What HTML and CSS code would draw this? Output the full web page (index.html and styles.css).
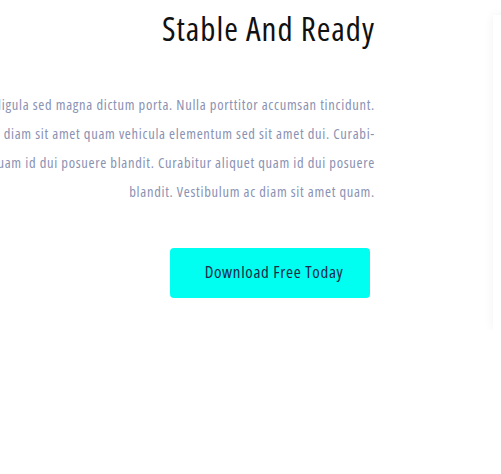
FILE: index.html
```html
<!DOCTYPE html>
<html>
<head>
<meta charset="utf-8">
<link rel="stylesheet" href="styles.css">
</head>
<body>
<div class="page">
  <section class="content">
    <h2 class="title">Stable And Ready</h2>
    <div class="text">
      <span class="line">Curabitur non nulla sit amet nisl tempus convallis quis ac lectus ligula sed magna dictum porta. Nulla porttitor accumsan tincidunt.</span>
      <span class="line">Vivamus suscipit tortor eget felis porttitor volutpat. Vestibulum diam sit amet quam vehicula elementum sed sit amet dui. Curabi-</span>
      <span class="line">tur arcu erat, accumsan id imperdiet et, porttitor at sem quam id dui posuere blandit. Curabitur aliquet quam id dui posuere</span>
      <span class="line">blandit. Vestibulum ac diam sit amet quam.</span>
    </div>
    <div class="actions">
      <a class="btn" href="#">Download Free Today</a>
    </div>
  </section>
  <aside class="side"></aside>
</div>
</body>
</html>
```
FILE: styles.css
```css
html, body {
  margin: 0;
  padding: 0;
  background: #ffffff;
  overflow: hidden;
}
body {
  font-family: "Open Sans", "Noto Sans", sans-serif;
  font-stretch: 75%;
}
.page {
  display: flex;
  width: 800px;
}
.content {
  flex: 0 0 375px;
  min-width: 0;
  display: flex;
  flex-direction: column;
  align-items: flex-end;
  margin-right: 118px;
}
.title {
  margin: 9px 0 0 0;
  font-size: 33px;
  letter-spacing: 1px;
  font-weight: 400;
  line-height: 40px;
  color: #111111;
  white-space: nowrap;
}
.text {
  margin-top: 41px;
  display: flex;
  flex-direction: column;
  align-items: flex-end;
  font-size: 14.5px;
  letter-spacing: 0.7px;
  line-height: 29px;
  color: #8a92b2;
}
.line {
  white-space: nowrap;
}
.actions {
  margin-top: 42px;
  padding-right: 5px;
}
.btn {
  display: flex;
  align-items: center;
  justify-content: center;
  box-sizing: border-box;
  padding: 0 0 3px 8px;
  width: 200px;
  height: 50px;
  background: #00fff0;
  border-radius: 4px;
  color: #1c2b4a;
  font-size: 17px;
  letter-spacing: 0.65px;
  text-decoration: none;
}
.side {
  flex: 0 0 300px;
  margin-top: 15px;
  height: 315px;
  background: #ffffff;
  box-shadow: 0 0 10px rgba(0, 0, 0, 0.06);
}
```
